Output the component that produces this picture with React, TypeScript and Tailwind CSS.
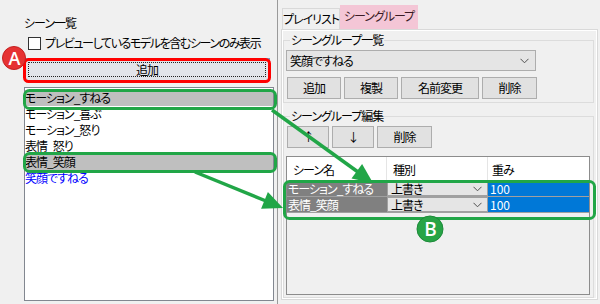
const jp = "font-['Noto_Sans_CJK_JP','Noto_Sans',sans-serif] [font-feature-settings:'palt'] tracking-[-1px]";

const Chevron = () => (
  <svg width="9" height="6" viewBox="0 0 9 6" className="shrink-0">
    <polyline points="0.5,0.8 4.5,4.8 8.5,0.8" fill="none" stroke="#505050" strokeWidth="1" />
  </svg>
);

const WinButton = ({ label, w }: { label: string; w: string }) => (
  <div
    className={`${w} h-[22px] flex items-center justify-center bg-[#e1e1e1] border border-[#adadad] whitespace-nowrap`}
  >
    {label}
  </div>
);

const sceneItems = [
  { name: "モーション_すねる", selected: true },
  { name: "モーション_喜ぶ" },
  { name: "モーション_怒り" },
  { name: "表情_怒り" },
  { name: "表情_笑顔", selected: true },
  { name: "笑顔ですねる", blue: true },
];

const groupRows = ["モーション_すねる", "表情_笑顔"];

const App = () => {
  return (
    <div
      className={`relative w-[600px] h-[304px] overflow-hidden bg-[#f0f0f0] flex text-[12px] leading-[16px] text-black ${jp}`}
    >
      {/* left panel : scene list */}
      <div className="w-[277px] shrink-0 pl-[24px] pt-[15px] flex flex-col">
        <div className="h-[16px]">シーン一覧</div>

        {/* checkbox */}
        <div className="mt-[5px] ml-[4px] h-[14px] flex items-center gap-[4px] whitespace-nowrap">
          <span className="w-[13px] h-[13px] border border-[#333333] bg-white shrink-0" />
          <span className="tracking-[-1.4px]">プレビューしているモデルを含むシーンのみ表示</span>
        </div>

        {/* add button */}
        <div className="mt-[8px] w-[246px] h-[23px] p-[3px] bg-[#e2e4e9] border border-[#7a9cc4]">
          <div className="w-full h-full border border-dotted border-[#222] flex items-center justify-center">
            追加
          </div>
        </div>

        {/* list box */}
        <div className="mt-[6px] w-[250px] h-[214px] border border-[#828790] bg-white pt-[2px]">
          {sceneItems.map((it) => (
            <div
              key={it.name}
              className={`h-[16px] flex items-center whitespace-nowrap ${
                it.selected ? "bg-[#bfbfbf]" : ""
              } ${it.blue ? "text-[#0000ff]" : ""}`}
            >
              {it.name}
            </div>
          ))}
        </div>
      </div>

      {/* splitter */}
      <div className="w-px bg-[#9a9a9a] shrink-0" />

      {/* right panel : tabs */}
      <div className="flex-1 pl-[3px] pr-[2px] pb-[4px] flex flex-col">
        {/* tab headers */}
        <div className="h-[29px] flex items-end shrink-0 whitespace-nowrap">
          <div className="ml-[1px] w-[58px] h-[21px] border border-b-0 border-[#d9d9d9] bg-[#f0f0f0] flex items-center justify-center">
            プレイリスト
          </div>
          <div className="w-[78px] h-[24px] bg-[#f4c6d6] text-[#3a1a25] flex items-center justify-center pb-[2px]">
            シーングループ
          </div>
        </div>

        {/* tab page */}
        <div className="flex-1 border border-[#d9d9d9] bg-white p-px flex flex-col">
          <div className="flex-1 bg-[#f0f0f0] pr-[2px] flex flex-col">
            {/* scene group list */}
            <fieldset className="mt-[2px] border border-[#dcdcdc] px-[2px] pb-[3px]">
              <legend className="ml-[4px] px-[1px] leading-[14px]">シーングループ一覧</legend>
              <div className="mt-[3px] w-[250px] h-[21px] bg-[#e5e5e5] border border-[#adadad] pl-[3px] pr-[6px] flex items-center justify-between">
                <span>笑顔ですねる</span>
                <Chevron />
              </div>
              <div className="mt-[6px] ml-px flex gap-[3px]">
                <WinButton label="追加" w="w-[54px]" />
                <WinButton label="複製" w="w-[54px]" />
                <WinButton label="名前変更" w="w-[78px]" />
                <WinButton label="削除" w="w-[55px]" />
              </div>
            </fieldset>

            {/* scene group edit */}
            <fieldset className="mt-[6px] flex-1 border border-[#dcdcdc] px-[2px] pb-[2px] flex flex-col">
              <legend className="ml-[4px] px-[1px] leading-[14px]">シーングループ編集</legend>
              <div className="mt-[3px] ml-px flex gap-[3px]">
                <WinButton label="↑" w="w-[42px]" />
                <WinButton label="↓" w="w-[42px]" />
                <WinButton label="削除" w="w-[55px]" />
              </div>

              {/* grid */}
              <div className="mt-[8px] w-[304px] flex-1 border border-[#8c8c8c] bg-[#f0f0f0] flex flex-col">
                <div className="h-[24px] bg-white flex shrink-0">
                  <div className="w-[100px] border-r border-[#e5e5e5] pl-[6px] pt-[5px]">シーン名</div>
                  <div className="w-[101px] border-r border-[#e5e5e5] pl-[6px] pt-[5px]">種別</div>
                  <div className="flex-1 pl-[4px] pt-[5px]">重み</div>
                </div>
                {groupRows.map((name) => (
                  <div key={name} className="h-[16px] flex border-b border-[#a0a0a0]">
                    <div className="w-[100px] bg-[#808080] text-white pl-[1px] flex items-center whitespace-nowrap">
                      {name}
                    </div>
                    <div className="w-[101px] bg-[#e5e5e5] border border-[#a0a0a0] pl-[3px] pr-[5px] flex items-center justify-between">
                      <span>上書き</span>
                      <Chevron />
                    </div>
                    <div className="flex-1 bg-[#0078d7] text-white pl-[2px] flex items-center tracking-normal">100</div>
                  </div>
                ))}
              </div>
            </fieldset>
          </div>
        </div>
      </div>

      {/* annotations */}
      <svg
        width="600"
        height="304"
        viewBox="0 0 600 304"
        className="absolute inset-0 pointer-events-none"
      >
        <rect x="24.5" y="59.5" width="245" height="22" rx="4" fill="none" stroke="#ff0000" strokeWidth="3" />

        <rect x="24.5" y="90.5" width="251" height="18" rx="5" fill="none" stroke="#21a647" strokeWidth="3" />
        <rect x="24.5" y="153.5" width="251" height="18" rx="5" fill="none" stroke="#21a647" strokeWidth="3" />
        <rect x="284.5" y="181.5" width="310" height="37" rx="5" fill="none" stroke="#21a647" strokeWidth="3" />

        {/* arrows */}
        <line x1="272" y1="110" x2="358" y2="172" stroke="#21a647" strokeWidth="3.5" />
        <polygon points="373,183 351.5,178.6 362.1,164" fill="#21a647" />
        <line x1="195" y1="172" x2="266" y2="201" stroke="#21a647" strokeWidth="3.5" />
        <polygon points="283,208 261.1,208.7 267.9,192.1" fill="#21a647" />

        {/* badges */}
        <circle cx="14" cy="58" r="11.5" fill="#e63232" stroke="#c42020" strokeWidth="1" />
        <text
          x="14"
          y="64.5"
          textAnchor="middle"
          fill="#ffffff"
          fontSize="18"
          fontWeight="600"
          fontFamily="'Open Sans','Liberation Sans',sans-serif"
        >
          A
        </text>
        <circle cx="430" cy="229" r="13" fill="#27a446" stroke="#1d8a39" strokeWidth="1" />
        <text
          x="430"
          y="236"
          textAnchor="middle"
          fill="#ffffff"
          fontSize="19"
          fontWeight="600"
          fontFamily="'Open Sans','Liberation Sans',sans-serif"
        >
          B
        </text>
      </svg>
    </div>
  );
};

export default App;
